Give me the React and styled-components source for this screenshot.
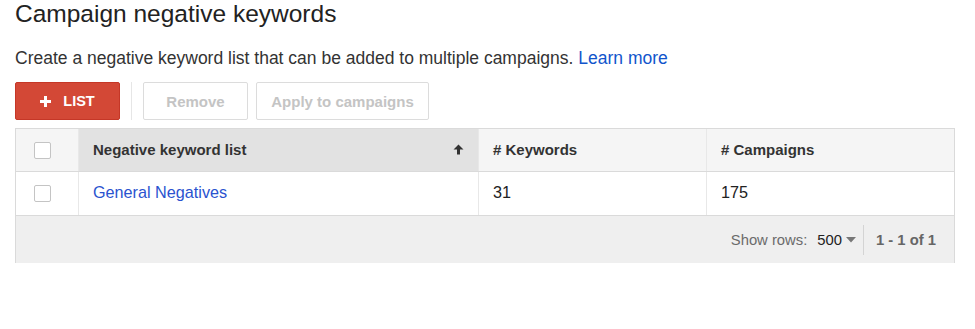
import React from 'react';
import styled, { createGlobalStyle } from 'styled-components';

const GlobalStyle = createGlobalStyle`
    body {
        margin: 0;
        background: #fff;
        font-family: Arial, "Liberation Sans", sans-serif;
    }
`;

const Page = styled.div`
    padding: 0 20px 0 15px;
    width: 940px;
`;

const Title = styled.h1`
    margin: 0;
    font-size: 24.5px;
    line-height: 28px;
    font-weight: normal;
    color: #222;
`;

const Description = styled.p`
    margin: 20px 0 0;
    font-size: 17.5px;
    line-height: 20px;
    color: #333;
`;

const Link = styled.a`
    color: #1155cc;
    text-decoration: none;
`;

const Toolbar = styled.div`
    display: flex;
    align-items: stretch;
    height: 38px;
    margin-top: 14px;
`;

const Button = styled.button`
    box-sizing: border-box;
    height: 38px;
    width: ${p => p.$width}px;
    border: 1px solid #dcdcdc;
    border-radius: 2px;
    background: #fff;
    color: #c4c4c4;
    font-family: Arial, "Liberation Sans", sans-serif;
    font-weight: bold;
    font-size: 15px;
    padding: 0;
    margin-right: 8px;
`;

const AddButton = styled(Button)`
    display: flex;
    align-items: center;
    justify-content: center;
    gap: 12px;
    background: #d34836;
    border-color: #c53727;
    color: #fff;
    font-size: 14.5px;
    margin-right: 0;
`;

const Separator = styled.div`
    width: 1px;
    background: #e6e6e6;
    margin: 0 11px;
`;

const Table = styled.div`
    margin-top: 8px;
    border: 1px solid #dadada;
    border-bottom: none;
`;

const Row = styled.div`
    display: grid;
    grid-template-columns: 62px 400px 228px 1fr;
    height: ${p => p.$height}px;
    border-bottom: 1px solid #dadada;
    background: ${p => (p.$header ? '#f5f5f5' : '#fff')};
`;

const Cell = styled.div`
    display: flex;
    align-items: center;
    justify-content: space-between;
    padding: 0 14px 2px;
    border-left: ${p => (p.$first ? 'none' : '1px solid #e8e8e8')};
    background: ${p => (p.$sorted ? '#e2e2e2' : 'transparent')};
    font-size: ${p => (p.$header ? '15px' : '16.2px')};
    font-weight: ${p => (p.$header ? 'bold' : 'normal')};
    color: ${p => (p.$header ? '#333' : '#222')};
`;

const CheckCell = styled(Cell)`
    padding: 0 0 0 18px;
    justify-content: flex-start;
`;

const Checkbox = styled.span`
    box-sizing: border-box;
    width: 17px;
    height: 17px;
    border: 1px solid #c4c4c4;
    border-radius: 2px;
    background: #fff;
`;

const NameLink = styled(Link)`
    color: #2a53cf;
`;

const Footer = styled.div`
    display: flex;
    align-items: center;
    justify-content: flex-end;
    height: 47px;
    padding-right: 18px;
    background: #efefef;
    font-size: 14.8px;
    color: #6b6b6b;
`;

const RowsSelect = styled.span`
    display: flex;
    align-items: center;
    gap: 4px;
    margin-left: 10px;
    color: #222;
`;

const FooterDivider = styled.span`
    width: 1px;
    height: 30px;
    background: #d4d4d4;
    margin: 0 12px 0 7px;
`;

const Range = styled.span`
    font-weight: bold;
    color: #666;
`;

const Plus = () => (
    <svg width="11" height="11" viewBox="0 0 11 11">
        <path d="M4 0h3v4h4v3H7v4H4V7H0V4h4z" fill="#fff" />
    </svg>
);

const SortArrow = () => (
    <svg width="11" height="11" viewBox="0 0 11 11">
        <path d="M5.5 0.5L10.5 5.5H7V10.5H4V5.5H0.5Z" fill="#333" />
    </svg>
);

const Caret = () => (
    <svg width="10" height="6" viewBox="0 0 10 6">
        <path d="M0 0h10L5 5.5z" fill="#777" />
    </svg>
);

const App = () => {
    return (
        <>
            <GlobalStyle />
            <Page>
                <Title>Campaign negative keywords</Title>
                <Description>
                    Create a negative keyword list that can be added to multiple campaigns.{' '}
                    <Link href="#">Learn more</Link>
                </Description>
                <Toolbar>
                    <AddButton $width={105}>
                        <Plus />
                        LIST
                    </AddButton>
                    <Separator />
                    <Button $width={105}>Remove</Button>
                    <Button $width={173}>Apply to campaigns</Button>
                </Toolbar>
                <Table>
                    <Row $header $height={42}>
                        <CheckCell $first $header><Checkbox /></CheckCell>
                        <Cell $header $sorted>
                            Negative keyword list
                            <SortArrow />
                        </Cell>
                        <Cell $header># Keywords</Cell>
                        <Cell $header># Campaigns</Cell>
                    </Row>
                    <Row $height={43}>
                        <CheckCell $first><Checkbox /></CheckCell>
                        <Cell><NameLink href="#">General Negatives</NameLink></Cell>
                        <Cell>31</Cell>
                        <Cell>175</Cell>
                    </Row>
                    <Footer>
                        Show rows:
                        <RowsSelect>500 <Caret /></RowsSelect>
                        <FooterDivider />
                        <Range>1 - 1 of 1</Range>
                    </Footer>
                </Table>
            </Page>
        </>
    );
};

export default App;
